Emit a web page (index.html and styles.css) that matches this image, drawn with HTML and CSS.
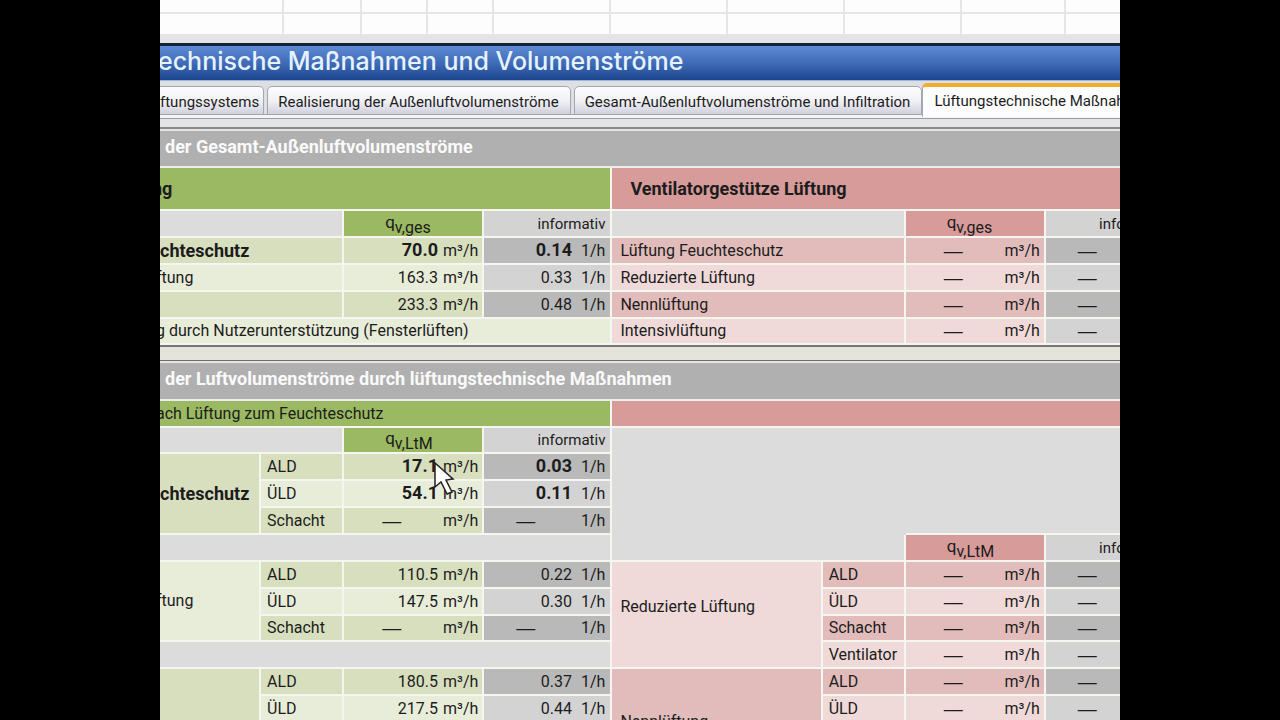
FILE: index.html
```
<!DOCTYPE html>
<html lang="de">
<head>
    <meta charset="utf-8">
    <title>Volumenströme</title>
    <link rel="stylesheet" href="styles.css">
</head>
<body>
    <main class="screen">
        <div class="sheet">
            <div class="sheet-row"><i class="w-first"></i><i class="w-78"></i><i class="w-66"></i><i class="w-66"></i><i></i><i></i><i></i><i></i><i class="w-104"></i></div>
            <div class="sheet-row"><i class="w-first"></i><i class="w-78"></i><i class="w-66"></i><i class="w-66"></i><i></i><i></i><i></i><i></i><i class="w-104"></i></div>
        </div>

        <h1 class="titlebar">echnische Maßnahmen und Volumenströme</h1>

        <div class="tabs" role="tablist">
            <button class="tab tab-first" role="tab">ftungssystems</button>
            <button class="tab" role="tab">Realisierung der Außenluftvolumenströme</button>
            <button class="tab" role="tab">Gesamt-Außenluftvolumenströme und Infiltration</button>
            <button class="tab active" role="tab" aria-selected="true">Lüftungstechnische Maßnahmen</button>
        </div>

        <section class="panel">
            <h2>der Gesamt-Außenluftvolumenströme</h2>
            <table>
                <colgroup>
                    <col class="c-name"><col class="c-type"><col class="c-flow"><col class="c-info">
                    <col class="c-name-r"><col class="c-type"><col class="c-flow"><col class="c-info">
                </colgroup>
                <tr class="tall">
                    <th class="green cut" colspan="4">ng</th>
                    <th class="pink indent" colspan="4">Ventilatorgestütze Lüftung</th>
                </tr>
                <tr>
                    <td class="blank" colspan="2"></td>
                    <td class="green q">q<sub>v,ges</sub></td>
                    <td class="light right">informativ</td>
                    <td class="blank" colspan="2"></td>
                    <td class="pink q">q<sub>v,ges</sub></td>
                    <td class="light right">informativ</td>
                </tr>
                <tr>
                    <td class="green-a strong" colspan="2">chteschutz</td>
                    <td class="green-a"><div class="value"><b>70.0</b><span>m³/h</span></div></td>
                    <td class="dark info"><div class="value"><b>0.14</b><span>1/h</span></div></td>
                    <td class="pink-a" colspan="2">Lüftung Feuchteschutz</td>
                    <td class="pink-a"><div class="value none"><em>—</em><span>m³/h</span></div></td>
                    <td class="dark info"><div class="value none"><em>—</em></div></td>
                </tr>
                <tr>
                    <td class="green-b cut" colspan="2">ftung</td>
                    <td class="green-b"><div class="value">163.3<span>m³/h</span></div></td>
                    <td class="light info"><div class="value">0.33<span>1/h</span></div></td>
                    <td class="pink-b" colspan="2">Reduzierte Lüftung</td>
                    <td class="pink-b"><div class="value none"><em>—</em><span>m³/h</span></div></td>
                    <td class="light info"><div class="value none"><em>—</em></div></td>
                </tr>
                <tr>
                    <td class="green-a" colspan="2"></td>
                    <td class="green-a"><div class="value">233.3<span>m³/h</span></div></td>
                    <td class="dark info"><div class="value">0.48<span>1/h</span></div></td>
                    <td class="pink-a" colspan="2">Nennlüftung</td>
                    <td class="pink-a"><div class="value none"><em>—</em><span>m³/h</span></div></td>
                    <td class="dark info"><div class="value none"><em>—</em></div></td>
                </tr>
                <tr class="low">
                    <td class="green-b cut" colspan="4">g durch Nutzerunterstützung (Fensterlüften)</td>
                    <td class="pink-b" colspan="2">Intensivlüftung</td>
                    <td class="pink-b"><div class="value none"><em>—</em><span>m³/h</span></div></td>
                    <td class="light info"><div class="value none"><em>—</em></div></td>
                </tr>
            </table>
        </section>

        <section class="panel second">
            <h2>der Luftvolumenströme durch lüftungstechnische Maßnahmen</h2>
            <table>
                <colgroup>
                    <col class="c-name"><col class="c-type"><col class="c-flow"><col class="c-info">
                    <col class="c-name-r"><col class="c-type"><col class="c-flow"><col class="c-info">
                </colgroup>
                <tr>
                    <td class="green cut" colspan="4">ach Lüftung zum Feuchteschutz</td>
                    <td class="pink" colspan="4"></td>
                </tr>
                <tr class="low">
                    <td class="blank" colspan="2"></td>
                    <td class="green q">q<sub>v,LtM</sub></td>
                    <td class="light right">informativ</td>
                    <td class="blank open" colspan="2" rowspan="4"></td>
                    <td class="blank" colspan="2" rowspan="4"></td>
                </tr>
                <tr>
                    <td class="green-a strong" rowspan="3">chteschutz</td>
                    <td class="green-a type">ALD</td>
                    <td class="green-a with-pointer">
                        <div class="value"><b>17.1</b><span>m³/h</span></div>
                        <svg class="pointer" width="24" height="34" viewBox="0 0 24 34">
                            <path d="M2 1 L2 25 L8 20 L14 32 L19 30 L13 18 L20 17 Z" fill="#fff" stroke="#222" stroke-width="1.5"/>
                        </svg>
                    </td>
                    <td class="dark info"><div class="value"><b>0.03</b><span>1/h</span></div></td>
                </tr>
                <tr>
                    <td class="green-b type">ÜLD</td>
                    <td class="green-b"><div class="value"><b>54.1</b><span>m³/h</span></div></td>
                    <td class="light info"><div class="value"><b>0.11</b><span>1/h</span></div></td>
                </tr>
                <tr>
                    <td class="green-a type">Schacht</td>
                    <td class="green-a"><div class="value none"><em>—</em><span>m³/h</span></div></td>
                    <td class="dark info"><div class="value none"><em>—</em><span>1/h</span></div></td>
                </tr>
                <tr>
                    <td class="blank" colspan="4"></td>
                    <td class="blank" colspan="2"></td>
                    <td class="pink q">q<sub>v,LtM</sub></td>
                    <td class="light right">informativ</td>
                </tr>
                <tr>
                    <td class="green-b cut" rowspan="3">ftung</td>
                    <td class="green-a type">ALD</td>
                    <td class="green-a"><div class="value">110.5<span>m³/h</span></div></td>
                    <td class="dark info"><div class="value">0.22<span>1/h</span></div></td>
                    <td class="pink-b raised" rowspan="4">Reduzierte Lüftung</td>
                    <td class="pink-a type">ALD</td>
                    <td class="pink-a"><div class="value none"><em>—</em><span>m³/h</span></div></td>
                    <td class="dark info"><div class="value none"><em>—</em></div></td>
                </tr>
                <tr>
                    <td class="green-b type">ÜLD</td>
                    <td class="green-b"><div class="value">147.5<span>m³/h</span></div></td>
                    <td class="light info"><div class="value">0.30<span>1/h</span></div></td>
                    <td class="pink-b type">ÜLD</td>
                    <td class="pink-b"><div class="value none"><em>—</em><span>m³/h</span></div></td>
                    <td class="light info"><div class="value none"><em>—</em></div></td>
                </tr>
                <tr class="low">
                    <td class="green-a type">Schacht</td>
                    <td class="green-a"><div class="value none"><em>—</em><span>m³/h</span></div></td>
                    <td class="dark info"><div class="value none"><em>—</em><span>1/h</span></div></td>
                    <td class="pink-a type">Schacht</td>
                    <td class="pink-a"><div class="value none"><em>—</em><span>m³/h</span></div></td>
                    <td class="dark info"><div class="value none"><em>—</em></div></td>
                </tr>
                <tr>
                    <td class="blank" colspan="4"></td>
                    <td class="pink-b type">Ventilator</td>
                    <td class="pink-b"><div class="value none"><em>—</em><span>m³/h</span></div></td>
                    <td class="light info"><div class="value none"><em>—</em></div></td>
                </tr>
                <tr>
                    <td class="green-a" rowspan="4"></td>
                    <td class="green-a type">ALD</td>
                    <td class="green-a"><div class="value">180.5<span>m³/h</span></div></td>
                    <td class="dark info"><div class="value">0.37<span>1/h</span></div></td>
                    <td class="pink-a" rowspan="4">Nennlüftung</td>
                    <td class="pink-a type">ALD</td>
                    <td class="pink-a"><div class="value none"><em>—</em><span>m³/h</span></div></td>
                    <td class="dark info"><div class="value none"><em>—</em></div></td>
                </tr>
                <tr>
                    <td class="green-b type">ÜLD</td>
                    <td class="green-b"><div class="value">217.5<span>m³/h</span></div></td>
                    <td class="light info"><div class="value">0.44<span>1/h</span></div></td>
                    <td class="pink-b type">ÜLD</td>
                    <td class="pink-b"><div class="value none"><em>—</em><span>m³/h</span></div></td>
                    <td class="light info"><div class="value none"><em>—</em></div></td>
                </tr>
                <tr></tr>
                <tr></tr>
            </table>
        </section>
    </main>
</body>
</html>
```
FILE: styles.css
```
* {
    box-sizing: border-box;
}

body {
    margin: 0;
    padding: 0 12.5%;
    background: #000;
    color: #1c1c1c;
    font-family: Roboto, "Liberation Sans", sans-serif;
    font-size: 16px;
    line-height: 20px;
}

.screen {
    height: 100vh;
    overflow: hidden;
    background: #e4e4e6;
}

/* spreadsheet behind the window */
.sheet {
    background: #fdfdfd;
    margin-bottom: 7px;
}

.sheet-row {
    display: flex;
    height: 22px;
    border-bottom: 2px solid #e6e6e8;
}

.sheet-row:first-child {
    height: 14px;
}

.sheet-row i {
    flex: none;
    width: 117px;
    border-right: 2px solid #e6e6e8;
}

.sheet-row .w-first { width: 124px; }
.sheet-row .w-78 { width: 78px; }
.sheet-row .w-66 { width: 66px; }
.sheet-row .w-104 { width: 104px; }

.titlebar {
    margin: 0;
    height: 38px;
    border-top: 3px solid #16213c;
    border-bottom: 1px solid #9db4de;
    background: linear-gradient(#5f8ad4, #3c68b4 55%, #1c458f);
    color: #e6f3ff;
    font-family: Inter, "Liberation Sans", sans-serif;
    font-size: 25px;
    font-weight: 500;
    line-height: 30px;
    text-indent: -2px;
    white-space: nowrap;
}

/* tabs */
.tabs {
    display: flex;
    align-items: flex-end;
    gap: 3px;
    height: 38px;
    padding-bottom: 3px;
    border-bottom: 1px solid #9a9ca4;
    background: linear-gradient(#dedfe2 33px, #a2a4ac 33px, #a2a4ac 34px, #f4f4f6 34px);
}

.tab {
    flex: none;
    height: 29px;
    padding: 3px 11px 0 10px;
    border: 1px solid #a4a6b0;
    border-radius: 5px 5px 0 0;
    background: linear-gradient(#fdfdfe, #f2f2f6 50%, #cfd0dc);
    color: #1c1c1c;
    font: inherit;
    font-size: 15px;
    white-space: nowrap;
}

.tab-first {
    padding-left: 0;
    padding-right: 4px;
    border-left: 0;
    border-top-left-radius: 0;
}

.tab.active {
    height: 34px;
    margin: 0 0 -2px -3px;
    padding: 0 8px 3px 11px;
    border-top: 4px solid #f2ac2c;
    border-bottom: 0;
    background: #fdfdfe;
}

/* result panels */
.panel {
    margin-top: 8px;
    border-top: 2px solid #8a8a8c;
    border-bottom: 2px solid #77777a;
}

.panel.second {
    margin-top: 0;
    border-top: 14px solid #e5e4da;
}

.panel h2 {
    margin: 0;
    height: 39px;
    padding-left: 5px;
    border-top: 2px solid #e4e4e4;
    border-bottom: 2px solid #ececea;
    background: #b0b0b0;
    color: #fafafa;
    font-size: 18px;
    line-height: 32px;
    white-space: nowrap;
}

.second h2 {
    height: 40px;
    box-shadow: 0 -1px #6e6c6c;
}

table {
    table-layout: fixed;
    width: 1014px;
    border-collapse: separate;
    border-spacing: 0;
}

.c-name { width: 101px; }
.c-name-r { width: 210px; }
.c-type { width: 83px; }
.c-flow { width: 140px; }
.c-info { width: 128px; }

tr {
    height: 27px;
}

.tall {
    height: 43px;
}

.low {
    height: 26px;
}

td, th {
    padding: 0 0 0 8px;
    border-right: 2px solid #f5f6f0;
    border-bottom: 2px solid #f5f6f0;
    text-align: left;
    white-space: nowrap;
}

.green { background: #9bb962; }
.green-a { background: #d7dfbf; }
.green-b { background: #e8edda; }
.pink { background: #d79b9a; }
.pink-a { background: #e1bcbb; }
.pink-b { background: #efdad9; }
.blank { background: #dcdcdc; }
.light { background: #d3d3d3; }
.dark { background: #b9b9b9; }

.open {
    border-right-color: #dcdcdc;
    border-bottom-color: #dcdcdc;
}

th, .strong {
    font-size: 18px;
    font-weight: bold;
}

.strong { padding-left: 0; }
.indent { padding-left: 18px; }
.type { padding-left: 6px; }

/* labels that run out of the left edge */
.cut {
    padding-left: 0;
    text-indent: -4px;
}

th.cut {
    text-indent: -8px;
}

.raised {
    padding-bottom: 16px;
}

.right {
    padding-right: 5px;
    font-size: 15px;
    text-align: right;
}

.q {
    padding: 0 0 4px 41px;
    font-size: 17px;
    line-height: 16px;
}

.q sub {
    font-size: 16px;
    line-height: 0;
    vertical-align: -5px;
}

.value {
    display: flex;
    justify-content: flex-end;
    align-items: baseline;
    gap: 5px;
    padding-right: 4px;
}

.info .value {
    gap: 9px;
    padding-right: 5px;
}

.value b {
    font-size: 18px;
}

.value.none {
    justify-content: space-between;
    align-items: center;
    padding-left: 30px;
}

.info .value.none {
    padding-left: 24px;
}

.value em {
    font-family: "Liberation Sans", sans-serif;
    font-size: 19px;
    font-style: normal;
    line-height: 18px;
}

.with-pointer {
    position: relative;
}

.pointer {
    position: absolute;
    left: 89px;
    top: 8px;
}
```
